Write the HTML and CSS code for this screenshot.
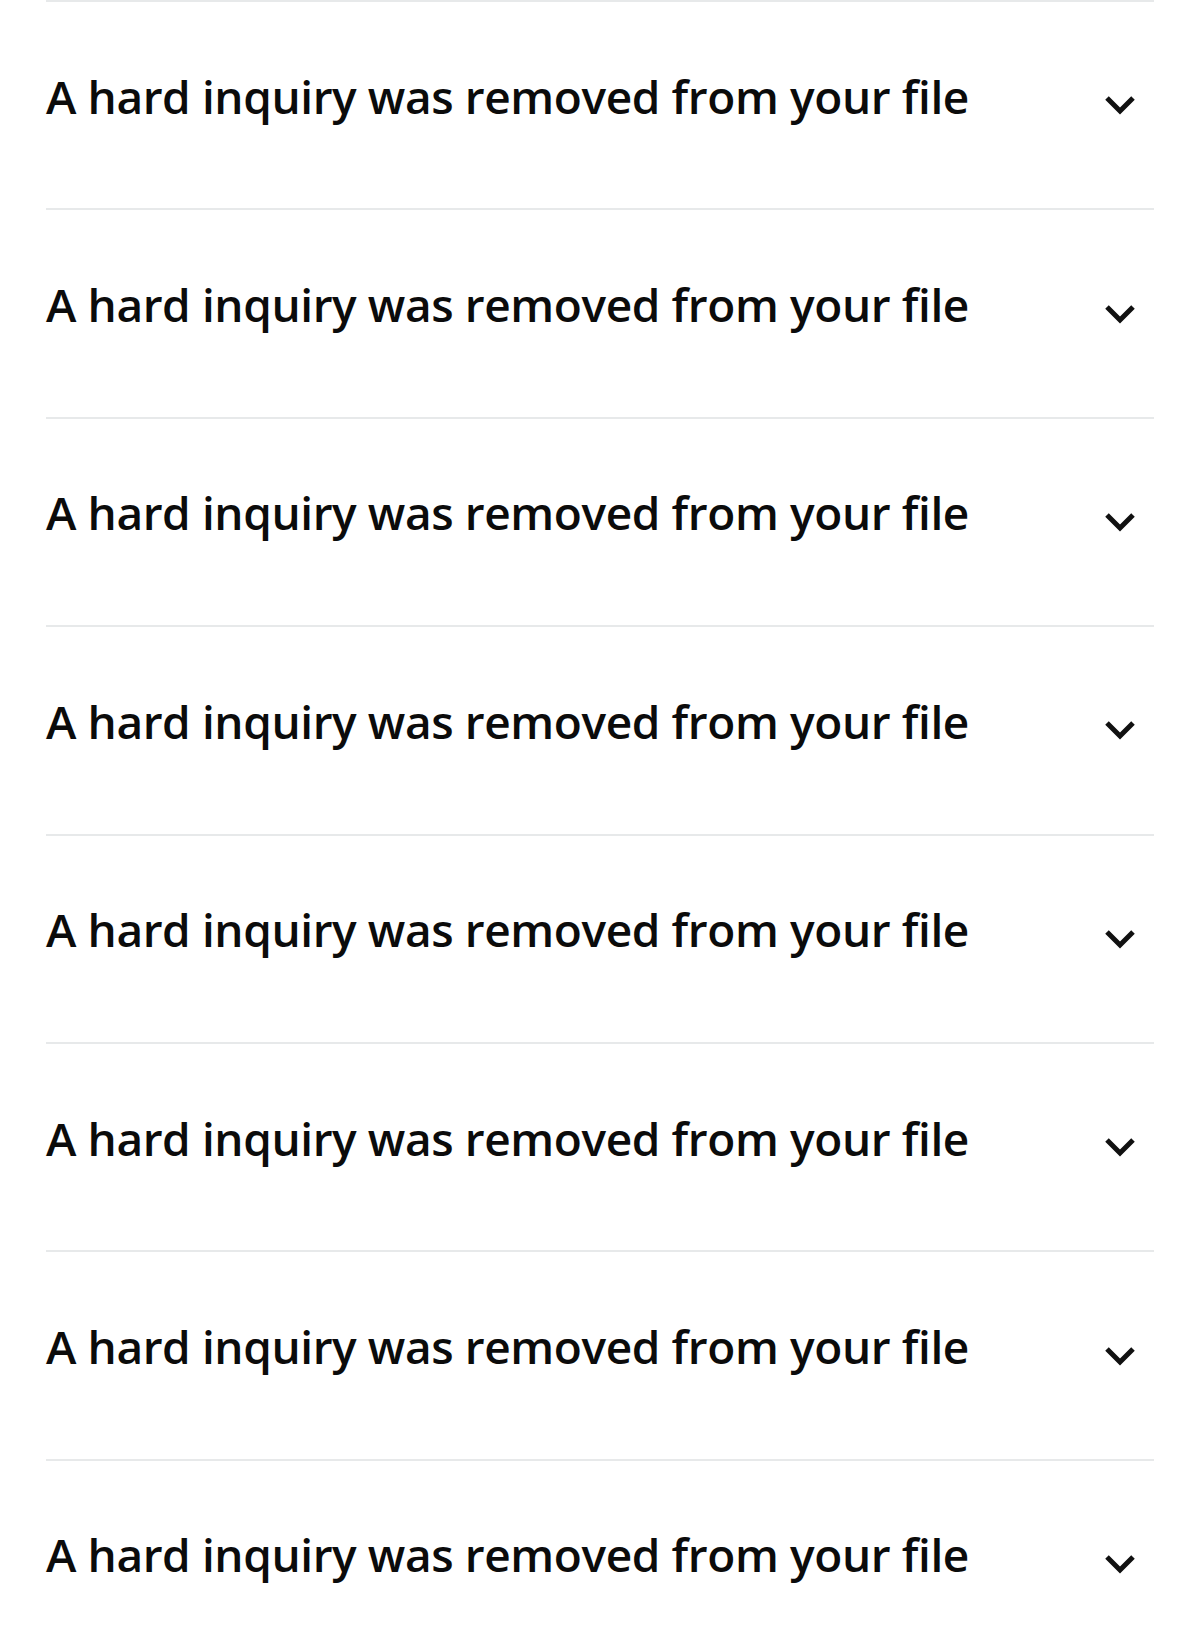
FILE: index.html
```html
<!DOCTYPE html>
<html lang="en">
<head>
<meta charset="utf-8">
<title>Inquiries</title>
<link rel="stylesheet" href="styles.css">
</head>
<body>
<ul class="list">
  <li class="item"><span class="title">A hard inquiry was removed from your file</span><svg class="chev" viewBox="0 0 32 20"><path d="M3 3 L16 16 L29 3"/></svg></li>
  <li class="item"><span class="title">A hard inquiry was removed from your file</span><svg class="chev" viewBox="0 0 32 20"><path d="M3 3 L16 16 L29 3"/></svg></li>
  <li class="item"><span class="title">A hard inquiry was removed from your file</span><svg class="chev" viewBox="0 0 32 20"><path d="M3 3 L16 16 L29 3"/></svg></li>
  <li class="item"><span class="title">A hard inquiry was removed from your file</span><svg class="chev" viewBox="0 0 32 20"><path d="M3 3 L16 16 L29 3"/></svg></li>
  <li class="item"><span class="title">A hard inquiry was removed from your file</span><svg class="chev" viewBox="0 0 32 20"><path d="M3 3 L16 16 L29 3"/></svg></li>
  <li class="item"><span class="title">A hard inquiry was removed from your file</span><svg class="chev" viewBox="0 0 32 20"><path d="M3 3 L16 16 L29 3"/></svg></li>
  <li class="item"><span class="title">A hard inquiry was removed from your file</span><svg class="chev" viewBox="0 0 32 20"><path d="M3 3 L16 16 L29 3"/></svg></li>
  <li class="item"><span class="title">A hard inquiry was removed from your file</span><svg class="chev" viewBox="0 0 32 20"><path d="M3 3 L16 16 L29 3"/></svg></li>
</ul>
</body>
</html>
```
FILE: styles.css
```css
html, body {
  margin: 0;
  padding: 0;
  background: #ffffff;
}
.list {
  list-style: none;
  margin: 0;
  padding: 0 46px;
}
.item {
  display: flex;
  align-items: center;
  justify-content: space-between;
  height: 206.4px;
  border-top: 2px solid #e7e9ea;
  color: #0b0b0b;
  font-family: "Open Sans", sans-serif;
  font-weight: 600;
  font-size: 46px;
  letter-spacing: -0.4px;
}
.title {
  line-height: 1;
  margin-bottom: 19px;
  white-space: nowrap;
}
.chev {
  width: 32px;
  height: 20px;
  margin-right: 18px;
  fill: none;
  stroke: #111;
  stroke-width: 5;
}
```
